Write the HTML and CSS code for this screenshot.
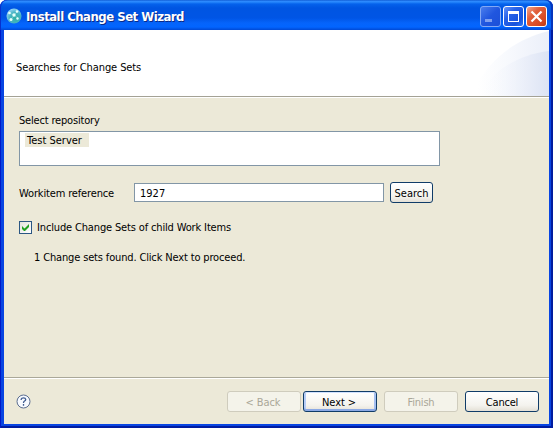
FILE: index.html
```html
<!DOCTYPE html>
<html lang="en">
<head>
<meta charset="utf-8">
<title>Install Change Set Wizard</title>
<link rel="stylesheet" href="styles.css">
</head>
<body>
<div class="window">
  <header class="titlebar">
    <svg class="app-icon" width="16" height="16" viewBox="0 0 16 16">
      <defs><radialGradient id="globe" cx=".6" cy=".65" r=".65"><stop offset="0" stop-color="#2fb0a4"/><stop offset=".6" stop-color="#48b4c4"/><stop offset="1" stop-color="#8ed2f4"/></radialGradient></defs>
      <circle cx="8" cy="8" r="7.5" fill="url(#globe)"/>
      <path d="M3 5 8 7 12 3M8 7 5 12M8 7 12 10" stroke="#7fd4d2" stroke-width=".7" fill="none"/>
      <g fill="#e8fffc"><circle cx="8" cy="7" r="1.7"/><circle cx="3.5" cy="5" r="1.3"/><circle cx="11" cy="3.5" r="1.3"/><circle cx="5" cy="11.5" r="1.5"/><circle cx="11.5" cy="10.5" r="1.2"/></g>
    </svg>
    <h1 class="title"><span>Install Change Set Wizard</span></h1>
    <div class="controls">
      <span class="control minimize"><svg width="19" height="19"><path d="M4 12h7v3H4z" fill="#7e9ff0"/></svg></span>
      <span class="control maximize"><svg width="19" height="19"><path d="M4 4h11v11H4zM5 7v7h9V7z" fill="#fff" fill-rule="evenodd"/></svg></span>
      <span class="control close"><svg width="19" height="19"><path d="M4.5 4.5l10 10M14.5 4.5l-10 10" stroke="#fff" stroke-width="2.2"/></svg></span>
    </div>
  </header>
  <main class="client">
    <section class="banner">
      <p class="banner-text">Searches for Change Sets</p>
      <svg class="banner-art" width="79" height="66" viewBox="0 0 79 66">
        <defs>
          <linearGradient id="sweep" x1="0" y1="0" x2="1" y2="0"><stop offset=".1" stop-color="#fff"/><stop offset=".5" stop-color="#f7f9fd"/><stop offset="1" stop-color="#ebeff9"/></linearGradient>
          <linearGradient id="arc" x1="0" y1="0" x2="1" y2="0"><stop offset=".1" stop-color="#f6f8fd" stop-opacity="0"/><stop offset="1" stop-color="#dce3f4"/></linearGradient>
        </defs>
        <path d="M0 66C18 30 43 10 79 1V66Z" fill="url(#sweep)"/>
        <path d="M8 66C21 42 46 25 79 21V66Z" fill="url(#arc)"/>
      </svg>
    </section>
    <section class="content">
      <label class="repo-label">Select repository</label>
      <div class="repo-list"><div class="repo-item">Test Server</div></div>
      <div class="reference-row">
        <label class="reference-label">Workitem reference</label>
        <div class="field"><span>1927</span></div>
        <button class="button search"><span>Search</span></button>
      </div>
      <div class="check-row">
        <span class="checkbox"><svg width="11" height="11"><path d="M2 4v3l2 2h1l4-4V2L4.500 6.500z" fill="#21a121"/></svg></span>
        <span class="check-label">Include Change Sets of child Work Items</span>
      </div>
      <p class="status">1 Change sets found. Click Next to proceed.</p>
    </section>
    <footer class="footer">
      <svg class="help" width="15" height="15" viewBox="0 0 15 15"><circle cx="7.500" cy="7.500" r="6.500" fill="#f7faff" stroke="#5c6e90"/><path d="M5.200 5.900V5.200Q5.500 3.800 7.500 3.800T9.700 5.400Q9.700 6.300 8.600 7T7.500 8.900M7.500 10v1.800" fill="none" stroke="#405c90" stroke-width="1.300"/></svg>
      <button class="button back" disabled><span>&lt; Back</span></button>
      <button class="button next"><span>Next &gt;</span></button>
      <button class="button finish" disabled><span>Finish</span></button>
      <button class="button cancel"><span>Cancel</span></button>
    </footer>
  </main>
</div>
</body>
</html>
```
FILE: styles.css
```css
* { box-sizing: border-box; }
body {
  margin: 0;
  background: #fff;
  color: #000;
  font: 11px/14px "DejaVu Sans Condensed", "DejaVu Sans", sans-serif;
  font-stretch: condensed;
  letter-spacing: -0.15px;
  white-space: nowrap;
}
h1, p { margin: 0; }
svg { display: block; }
.window {
  width: 553px;
  height: 428px;
  padding: 0 4px 4px;
  display: flex;
  flex-direction: column;
  border-radius: 7px 7px 0 0;
  background: #0845e2;
  box-shadow: inset 1px 0 #0019c8, inset -2px -2px #001ca0;
}
.titlebar {
  flex: 0 0 30px;
  margin: 0 -4px;
  padding: 0 6px;
  display: flex;
  align-items: flex-start;
  border-radius: 7px 7px 0 0;
  background: linear-gradient(#0650c8 0, #318bff 1px, #2788fc 2px, #0562ec 4px, #0055e2 8px, #0055e5 18px, #0564fb 23px, #0265ff 27px, #0049d5 30px);
  box-shadow: inset 1px 0 #0830cd, inset -2px 0 #0535bd;
}
.app-icon { margin-top: 8px; }
.title {
  flex: 1;
  margin: 8px 0 0 4px;
  color: #fff;
  font: bold 13px/18px "DejaVu Sans Condensed", "DejaVu Sans", sans-serif;
  font-stretch: condensed;
  letter-spacing: -0.500px;
  text-shadow: 1px 1px #0a2a87;
}
.controls { display: flex; gap: 2px; margin-top: 6px; }
.control {
  width: 21px;
  height: 21px;
  border: 1px solid #fff;
  border-radius: 3px;
  background: linear-gradient(135deg, #6493fa, #2862e8 35%, #1652dc 75%, #2e78f8);
}
.minimize { border-color: #82a8f5; background: linear-gradient(135deg, #4a7eed, #2056df 50%, #1c50d8); }
.close { background: linear-gradient(135deg, #f2a58b, #e1603c 35%, #d44620 80%, #b83a14); }
.client { flex: 1; display: flex; flex-direction: column; background: #ece9d8; }
.banner {
  height: 68px;
  display: flex;
  justify-content: space-between;
  background: #fff;
  border-bottom: 1px solid #fff;
  box-shadow: inset 0 -1px #a4a295;
}
.banner-text { margin: 31px 0 0 12px; letter-spacing: -0.100px; }
.content { flex: 1; padding: 16px 15px 0; }
.repo-label { display: block; height: 17px; letter-spacing: -0.180px; }
.repo-list {
  width: 421px;
  height: 35px;
  padding: 1px 5px;
  border: 1px solid #8296a6;
  background: #fff;
}
.repo-item { width: 64px; height: 14px; padding-left: 2px; background: #ece9d8; line-height: 16px; letter-spacing: 0; }
.reference-row { display: flex; align-items: center; height: 21px; margin-top: 16px; }
.reference-label { width: 115px; padding-top: 2px; }
.field {
  width: 250px;
  height: 19px;
  margin-right: 6px;
  padding: 3px 5px 0;
  border: 1px solid #8296a6;
  background: #fff;
  letter-spacing: 0;
}
.button {
  width: 74px;
  height: 21px;
  padding: 2px 0 0;
  border: 1px solid #103c68;
  border-radius: 3px;
  background: linear-gradient(#fff, #f4f3ee 70%, #e4e0d6);
  color: #000;
  font: inherit;
  letter-spacing: -0.200px;
  line-height: 17px;
}
.button.search { width: 43px; letter-spacing: 0; }
.button:disabled { border-color: #cfccbd; background: #f4f3ea; color: #aaa798; }
.check-row { display: flex; align-items: center; height: 14px; margin-top: 17px; gap: 5px; }
.checkbox { width: 13px; height: 13px; border: 1px solid #2b5783; background: linear-gradient(135deg, #e2e2dc, #fff); }
.check-label { padding-top: 2px; }
.status { margin: 17px 0 0 15px; }
.footer {
  height: 47px;
  padding: 13px 10px 0 12px;
  display: flex;
  border-top: 1px solid #aaa899;
  box-shadow: inset 0 1px #fff;
}
.help { margin: 3px auto 0 0; }
.next { margin-left: 2px; box-shadow: inset 0 1px #d2e2ff, inset 0 -2px #8ba9e5, inset 2px 0 #b5ccf6, inset -2px 0 #a4bff1; }
.finish, .cancel { margin-left: 7px; }
.button.next, .button.back { padding-right: 2px; letter-spacing: -0.100px; }
```
